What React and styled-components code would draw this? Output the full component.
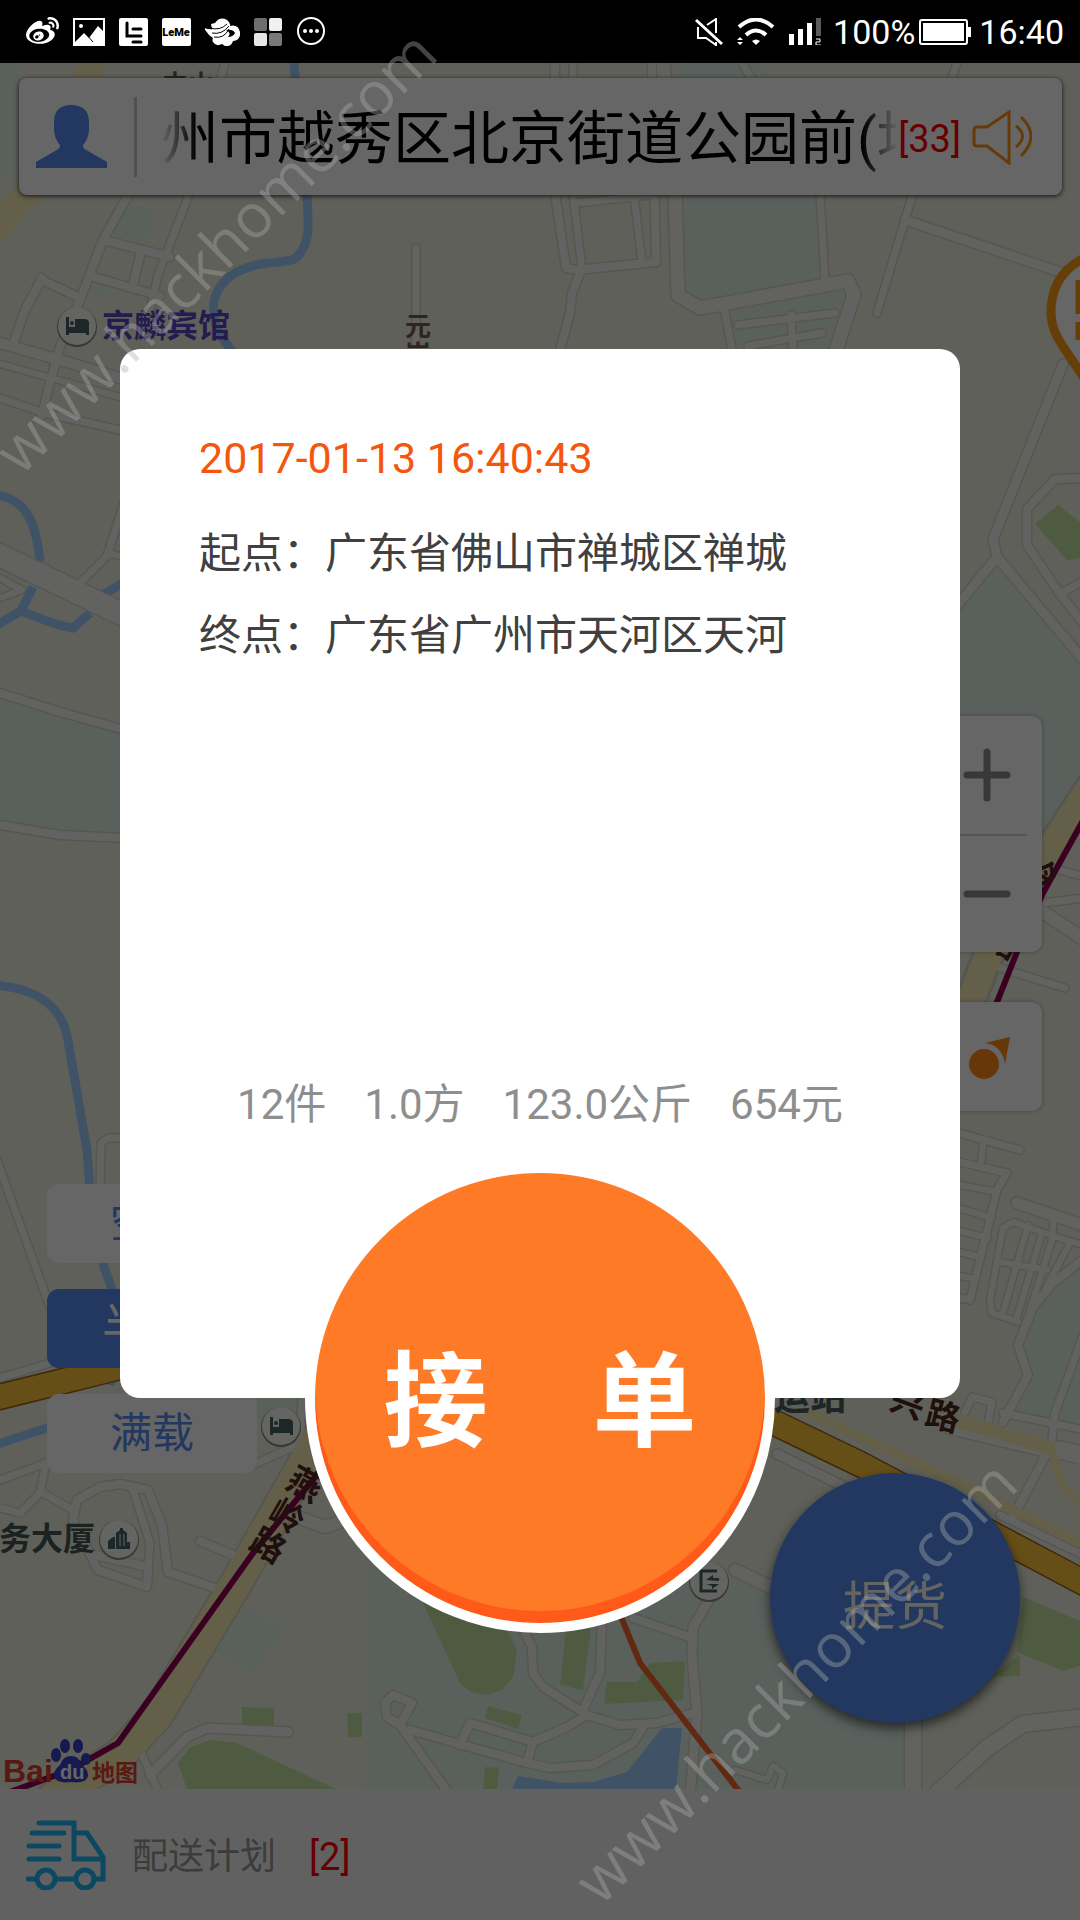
import React from 'react';
import styled, { createGlobalStyle } from 'styled-components';
import { FaWeibo } from 'react-icons/fa';

const GlobalStyle = createGlobalStyle`
    *, *::before, *::after {
        box-sizing: border-box;
    }
    body {
        margin: 0;
        background: #000;
        font-family: Roboto, "Noto Sans CJK SC", sans-serif;
    }
    button {
        font: inherit;
        border: 0;
        padding: 0;
        cursor: pointer;
    }
`

const Page = styled.div`
    position: relative;
    display: flex;
    flex-direction: column;
    min-height: 100vh;
    overflow: hidden;
`

const StatusBar = styled.header`
    display: flex;
    align-items: center;
    justify-content: space-between;
    height: 63px;
    padding: 0 16px 0 26px;
    background: #000;
    color: #fff;
    font-size: 34px;
    line-height: 40px;
`

const StatusGroup = styled.div`
    display: flex;
    align-items: center;
    gap: ${props => props.$gap}px;
    svg {
        display: block;
    }
`

const Screen = styled.main`
    position: relative;
    flex: 1;
    display: flex;
    flex-direction: column;
`

const MapArea = styled.section`
    position: relative;
    flex: 1;
    padding: 15px 18px 0 19px;
    overflow: hidden;
    background: #ebf0de;
`

const MapDrawing = styled.svg`
    position: absolute;
    inset: 0;
    width: 100%;
    height: 100%;
`

const NoticeCard = styled.div`
    position: relative;
    display: flex;
    align-items: center;
    height: 117px;
    padding: 0 30px 0 17px;
    border-radius: 8px;
    background: #fff;
    box-shadow: 0 1px 5px rgba(0, 0, 0, 0.8);
`

const IconButton = styled.button`
    display: flex;
    background: none;
    svg {
        display: block;
    }
`

const Divider = styled.div`
    width: 3px;
    height: 80px;
    margin: 0 24px 0 27px;
    background: #c8c8c8;
`

const Marquee = styled.p`
    flex: 1;
    min-width: 0;
    margin: 0;
    padding-top: 4px;
    overflow: hidden;
    white-space: nowrap;
    font-size: 58px;
    line-height: 80px;
    color: #000;
    mask-image: linear-gradient(to right, transparent, #000 36px, #000 calc(100% - 36px), transparent);
`

const Count = styled.span`
    font-size: 38px;
    line-height: 48px;
    color: #f00;
`

const NoticeCount = styled(Count)`
    margin-right: 11px;
    padding-top: 4px;
`

const LoadModes = styled.div`
    position: absolute;
    left: 47px;
    bottom: 316px;
    display: flex;
    flex-direction: column;
    gap: 26px;
`

const ModeButton = styled.button`
    width: 210px;
    height: 79px;
    border-radius: 12px;
    font-size: ${props => (props.$active ? 50 : 42)}px;
    line-height: 79px;
    background: ${props => (props.$active ? '#558cf0' : '#fff')};
    color: ${props => (props.$active ? '#fff' : '#558cf0')};
`

const SideTools = styled.div`
    position: absolute;
    right: 38px;
    bottom: 678px;
    width: 111px;
    display: flex;
    flex-direction: column;
    gap: 50px;
`

const ToolCard = styled.div`
    display: flex;
    flex-direction: column;
    padding: 0 15px;
    border-radius: 10px;
    background: #fff;
    box-shadow: 0 0 4px rgba(0, 0, 0, 0.3);
`

const ToolButton = styled.button`
    display: flex;
    align-items: center;
    justify-content: center;
    height: ${props => props.$height}px;
    background: none;
    & + & {
        border-top: 2px solid #d2d2d2;
    }
`

const PickupButton = styled.button`
    position: absolute;
    right: 60px;
    bottom: 66px;
    width: 250px;
    height: 250px;
    padding-top: 8px;
    border-radius: 50%;
    background: #558cf0;
    color: #fafaf0;
    font-size: 52px;
    box-shadow: 0 5px 12px rgba(0, 0, 0, 0.6);
`

const PlanBar = styled.footer`
    display: flex;
    align-items: center;
    height: 131px;
    padding: 0 26px;
    background: #f2f2f2;
`

const PlanLink = styled.a`
    display: flex;
    align-items: center;
    color: #969696;
    font-size: 36px;
    line-height: 48px;
    text-decoration: none;
    svg {
        margin-right: 26px;
    }
    span {
        padding-top: 4px;
    }
    ${Count} {
        margin-left: 33px;
    }
`

const Scrim = styled.div`
    position: absolute;
    inset: 0;
    display: flex;
    flex-direction: column;
    align-items: center;
    justify-content: center;
    padding: 0 120px 2px;
    background: rgba(0, 0, 0, 0.6);
`

const Dialog = styled.section`
    align-self: stretch;
    display: flex;
    flex-direction: column;
    min-height: 1049px;
    padding: 84px 79px 268px;
    border-radius: 20px;
    background: #fff;
    color: #404040;
    font-size: 42px;
    line-height: 50px;
`

const OrderTime = styled.time`
    color: #f5560e;
    font-size: 43px;
`

const Route = styled.dl`
    display: flex;
    flex-direction: column;
    gap: 32px;
    margin: 46px 0 auto;
    div {
        display: flex;
    }
    dd {
        margin: 0;
    }
`

const Cargo = styled.ul`
    display: flex;
    justify-content: center;
    gap: 38px;
    margin: 0;
    padding: 0;
    list-style: none;
    color: #8e8e8e;
`

const AcceptButton = styled.button`
    display: flex;
    align-items: center;
    justify-content: center;
    gap: 105px;
    width: 470px;
    height: 470px;
    margin-top: -235px;
    padding-top: 13px;
    border: 10px solid #fff;
    border-radius: 50%;
    background: #ff7a26;
    box-shadow: inset 0 -12px 0 #ff5a19;
    color: #fff;
    font-size: 104px;
    font-weight: 700;
    line-height: 120px;
`

const Watermark = styled.span`
    position: absolute;
    left: ${props => props.$left};
    ${props => props.$edge}: ${props => props.$offset};
    font-family: "Open Sans", sans-serif;
    font-size: 61px;
    font-weight: 500;
    line-height: 60px;
    color: rgba(172, 172, 172, 0.39);
    transform: rotate(-45deg);
    transform-origin: 0 53px;
    pointer-events: none;
`

// [width, points]
const roads = [
    [8, '150,140 127,197 103,240 80,300 60,347 48,390 42,415'],
    [7, '225,63 187,200 158,275 150,310'],
    [8, '103,240 170,257'],
    [8, '90,276 160,296'],
    [8, '141,252 133,285'],
    [8, '42,280 80,298'],
    [8, '42,278 25,310 14,342'],
    [10, '0,343 60,360 120,378'],
    [6, '0,364 120,397'],
    [7, '0,398 44,413 120,430'],
    [22, '-5,553 130,618'],
    [7, '125,500 107,556 80,583'],
    [6, '107,553 125,557'],
    [6, '0,578 22,590 0,598'],
    [8, '0,693 60,712 125,730'],
    [8, '0,825 60,835 125,838'],
    [7, '416,248 416,350'],
    [8, '555,63 555,193 566,268 577,270 656,262 652,63'],
    [7, '573,63 573,193 582,270'],
    [7, '577,203 650,195'],
    [7, '634,196 642,262'],
    [8, '580,273 572,293 570,313 560,350'],
    [13, '663,63 675,190 678,295 700,308 848,281 854,295 836,350'],
    [7, '742,63 820,193 825,280'],
    [7, '724,307 732,350'],
    [7, '738,325 835,313'],
    [7, '748,346 822,333'],
    [7, '791,315 793,350'],
    [7, '957,63 913,193 905,220 877,313'],
    [9, '905,220 1060,272'],
    [9, '1063,364 993,539 997,557'],
    [9, '955,608 997,557 1085,662'],
    [8, '1085,478 1055,479 1027,509 1027,545 1060,594 1085,625'],
    [7, '1060,594 1085,580'],
    [12, '1085,940 1043,912'],
    [7, '1043,903 1085,898'],
    [7, '1060,870 1085,877'],
    [7, '1000,968 1065,988'],
    [7, '955,1132 1020,1150'],
    [6, '983,1145 981,1163'],
    [7, '955,1161 1007,1173 997,1190 970,1300 955,1297'],
    [6, '955,1184 997,1192'],
    [6, '955,1207 992,1218'],
    [6, '955,1230 988,1238'],
    [6, '955,1251 980,1257'],
    [6, '955,1275 975,1279'],
    [11, '1017,1203 1085,1226'],
    [6, '1085,1245 1065,1240 1013,1222 1003,1228 990,1300 992,1313 1018,1322'],
    [6, '1028,1225 1003,1313'],
    [6, '1042,1233 1017,1317'],
    [6, '1053,1237 1030,1310'],
    [6, '1070,1243 1045,1290'],
    [6, '1054,1215 1052,1240'],
    [6, '1000,1262 1047,1270'],
    [8, '1085,1258 1053,1283 1033,1307 1018,1345 1028,1375 1003,1422'],
    [7, '1085,1330 1055,1413 1052,1440'],
    [7, '1003,1413 1085,1430'],
    [7, '965,1412 972,1397 992,1402 988,1423'],
    [8, '950,1430 1047,1453 1013,1517'],
    [17, '1060,1450 1090,1457'],
    [9, '777,1454 845,1487'],
    [7, '1000,1515 1085,1556'],
    [12, '735,1570 775,1589'],
    [16, '913,1700 913,1800'],
    [16, '930,1800 987,1748 1023,1724 1085,1717'],
    [6, '735,1770 767,1780 773,1766 783,1773 777,1795'],
    [8, '523,1630 532,1647 533,1673 543,1687 587,1715 620,1725 657,1723 693,1713'],
    [8, '602,1620 600,1673 583,1710'],
    [8, '587,1715 567,1727 533,1742 470,1723 460,1745'],
    [8, '410,1730 527,1763 550,1768 593,1765 633,1743 643,1727'],
    [8, '533,1742 527,1763'],
    [8, '450,1795 400,1725 412,1703 393,1695 385,1703 387,1717 400,1725'],
    [8, '633,1618 692,1638'],
    [9, '715,1590 693,1627 692,1657 697,1713 690,1795'],
    [8, '200,1541 240,1558'],
    [8, '215,1588 168,1572 162,1525 148,1490 120,1484 100,1487 77,1500 73,1520 98,1570 147,1587 148,1567 95,1555'],
    [7, '133,1490 150,1543 147,1583'],
    [7, '43,1493 73,1510'],
    [7, '0,1480 46,1463 40,1493 20,1513 0,1508'],
    [7, '255,1464 300,1444 302,1400'],
    [12, '300,1518 325,1527 345,1520'],
    [7, '140,1750 160,1795'],
    [9, '150,1775 187,1737 207,1728 288,1732'],
    [7, '-5,1155 50,1307'],
    [7, '100,1190 101,1143 108,1138 125,1138'],
    [7, '0,1378 50,1363']
];

const rivers = [
    'M293,55 L307,195 C308,225 312,240 297,257 C290,265 262,258 235,273 C212,288 208,310 220,335 L235,355',
    'M-5,495 C25,498 36,520 40,562',
    'M33,587 L21,611 L-5,626',
    'M21,611 C40,618 55,626 73,628 L90,613',
    'M104,594 L125,582',
    'M-5,985 C35,988 60,1005 67,1035 L87,1150 L90,1190 L98,1250 L125,1325 L110,1385',
    'M-5,1445 L50,1427'
];

const waters = [
    '0,63 20,63 19,172 0,175',
    '123,200 157,213 143,243 112,235',
    '95,283 110,287 105,297 92,293',
    '681,63 760,63 818,195 826,282 700,303 681,290',
    '730,307 845,290 832,350 738,350',
    '950,610 997,563 1080,665 1080,775 1040,835 950,860',
    '0,697 60,716 125,735 125,833 60,830 0,820',
    '1080,1268 1035,1310 1022,1345 1032,1377 1010,1412 1080,1425',
    '365,1480 735,1572 775,1592 905,1700 905,1789 365,1789',
    '247,1607 283,1627 257,1673 213,1650',
    '280,1440 305,1430 303,1400 240,1400'
];

const parks = [
    '1035,524 1058,505 1080,522 1080,558 1067,560',
    '1023,1597 1080,1621 1080,1666 1063,1671 1017,1652',
    '990,1677 1020,1655 1020,1676',
    '417,1590 433,1600 507,1630 517,1650 513,1677 502,1690 487,1695 470,1692 460,1683',
    '567,1620 592,1620 583,1690 560,1685',
    '607,1682 637,1682 650,1663 685,1661 683,1700 604,1704',
    '488,1706 522,1715 518,1729 485,1718',
    '485,1767 499,1768 497,1789 483,1789',
    '242,1707 274,1708 274,1725 242,1725',
    '347,1713 362,1713 362,1737 348,1737',
    '178,1763 190,1747 210,1740 237,1743 336,1789 187,1789'
];

const PoiDot = ({ x, y, children }) => (
    <g transform={`translate(${x} ${y})`}>
        <circle cy="1" r="20" fill="#8c8c80" />
        <circle r="19" fill="#fafaf5" />
        <g fill="#466464">{children}</g>
    </g>
)

const Bed = () => (
    <>
        <path d="M-11,-9 h3 v13 h18 v3 h-18 v2 h-3z" />
        <circle cx="-5" cy="-3" r="2" />
        <path d="M-2,-7 h9 q5,0 5,4 v12 h-3 v-4 h-11z" />
        <path d="M-8,1 h8 v4 h-8z" />
    </>
)

const MapView = () => (
    <MapDrawing viewBox="0 63 1080 1726" preserveAspectRatio="xMidYMid slice" aria-hidden="true">
        <g fill="#e0f0e7">{waters.map(points => <polygon key={points} points={points} />)}</g>
        <g fill="#c6e4a3">{parks.map(points => <polygon key={points} points={points} />)}</g>
        <polygon points="518,1776 563,1783 593,1782 627,1772 662,1728 682,1728 676,1789 512,1789" fill="#a0d0ff" />
        <g fill="none" stroke="#a0d0ff" strokeWidth="9">
            {rivers.map(d => <path key={d} d={d} />)}
        </g>
        <g fill="none" stroke="#d6d7cb" strokeLinejoin="round" strokeLinecap="round">
            {roads.map(([width, points]) => <polyline key={points} points={points} strokeWidth={width + 3} />)}
            <polyline points="320,1435 238,1580 157,1715 120,1755 50,1800" strokeWidth="35" />
            <polyline points="1092,785 1000,925 965,1015" strokeWidth="33" />
        </g>
        <g fill="none" stroke="#f5f5f2" strokeLinejoin="round" strokeLinecap="round">
            {roads.map(([width, points]) => <polyline key={points} points={points} strokeWidth={width} />)}
        </g>
        <g fill="none" stroke="#f8edb6" strokeLinejoin="round">
            <polyline points="98,55 30,190 -10,235" strokeWidth="26" />
            <polyline points="320,1435 238,1580 157,1715 120,1755 50,1800" strokeWidth="31" />
            <polyline points="1092,785 1000,925 965,1015" strokeWidth="27" />
            <polyline points="807,1412 973,1490 1090,1548" strokeWidth="10" />
            <polyline points="950,1418 1053,1449" strokeWidth="14" />
            <polyline points="1050,1445 1063,1487 1090,1510" strokeWidth="8" />
        </g>
        <g fill="none">
            <polyline points="-5,1398 120,1367 400,1330 700,1390 777,1424 860,1464 1090,1586" stroke="#a0641e" strokeWidth="27" />
            <polyline points="-5,1398 120,1367 400,1330 700,1390 777,1424 860,1464 1090,1586" stroke="#ffc63a" strokeWidth="24" />
            <polyline points="325,1465 253,1553 118,1743 70,1770 10,1792" stroke="#910055" strokeWidth="6" />
            <polyline points="1085,817 1043,893 1017,952 997,1002 960,1080" stroke="#910055" strokeWidth="6" />
            <polyline points="610,1590 640,1663 742,1795" stroke="#f5642d" strokeWidth="6" />
        </g>

        <PoiDot x={77} y={326}><Bed /></PoiDot>
        <PoiDot x={281} y={1426}><Bed /></PoiDot>
        <PoiDot x={119} y={1539}>
            <path d="M-11,10 v-8 l5,-4 h2 v12z M-3,10 v-16 l4,-3 v-2 h3 v2 l4,3 v9 h3 v7z" />
            <path d="M1,-5 v12 M5,-5 v12" stroke="#fafaf5" strokeWidth="1" />
        </PoiDot>
        <PoiDot x={709} y={1581}>
            <path d="M8,-10 h-16 v20 h16" fill="none" stroke="#466464" strokeWidth="3" />
            <path d="M-3,-1 l7,-5 v3 h6 v3 z M-3,3 h13 l-7,5 v-3z" />
        </PoiDot>

        <g fontFamily='"Noto Sans CJK SC", sans-serif' fontWeight="700">
            <text x="102" y="337" fontSize="32" fill="#5a46c3">京麟宾馆</text>
            <text x="-1" y="1550" fontSize="32" fill="#465550">务大厦</text>
            <text x="774" y="1410" fontSize="36" fill="#465f5f">运站</text>
            <g fill="#785a4b" fontSize="26">
                <text x="405" y="336">元</text>
                <text x="405" y="364">岗</text>
                <text x="162" y="94">中山</text>
            </g>
            <g fill="#50281e" fontSize="34" textAnchor="middle">
                <text transform="translate(904 1414) rotate(20)">兴</text>
                <text transform="translate(940 1428) rotate(14)">路</text>
                <text transform="translate(299 1495) rotate(30)">燕</text>
                <text transform="translate(281 1527) rotate(30)">岭</text>
                <text transform="translate(262 1556) rotate(30)">路</text>
                <text transform="translate(1033 884) rotate(30)">岭</text>
                <text transform="translate(997 952) rotate(30)">路</text>
            </g>
        </g>

        <path d="M1090,255 C1060,268 1051,290 1051,312 C1051,338 1068,350 1090,388z" fill="#fff" stroke="#ff9b14" strokeWidth="9" />
        <path d="M1078,280 v34 M1078,322 v18" stroke="#ff9b14" strokeWidth="5" />

        <g fontFamily='"Liberation Sans", "Noto Sans CJK SC", sans-serif' fontWeight="700">
            <g fill="#3741c8">
                <ellipse cx="56" cy="1755" rx="5" ry="7" />
                <ellipse cx="65" cy="1746" rx="5" ry="7" />
                <ellipse cx="78" cy="1746" rx="5" ry="7" />
                <ellipse cx="86" cy="1759" rx="5" ry="6" />
                <path d="M71,1756 q8,0 11,9 q7,6 6,11 q-2,8 -17,6 q-15,2 -17,-6 q-1,-5 6,-11 q3,-9 11,-9z" />
            </g>
            <text x="3" y="1782" fontSize="32" fill="#e13c2d">Bai</text>
            <text x="60" y="1779" fontSize="20" fill="#fff">du</text>
            <text x="92" y="1781" fontSize="23" fill="#e13c2d">地图</text>
        </g>
    </MapDrawing>
)

const StatusIcons = () => (
    <StatusGroup $gap={14} aria-hidden="true">
        <FaWeibo size={33} />
        <svg width="32" height="28" viewBox="0 0 32 28">
            <path d="M0,0 h32 v28 h-32z M2,2 v22 l9,-9 5,5 9,-12 5,5 v-11z" fill="#fff" fillRule="evenodd" />
            <path d="M14,17 l6,7" stroke="#000" strokeWidth="1" />
            <circle cx="8" cy="8" r="2" fill="#fff" />
        </svg>
        <svg width="29" height="28" viewBox="0 0 29 28">
            <rect width="29" height="28" rx="2" fill="#fff" />
            <path d="M8,5 v13 h6 M14,11 h8 M14,18 h8 M14,24 h8" fill="none" stroke="#000" strokeWidth="3" strokeLinecap="round" />
        </svg>
        <svg width="29" height="28" viewBox="0 0 29 28">
            <rect width="29" height="28" rx="2" fill="#fff" />
            <text x="14" y="18" textAnchor="middle" fontFamily="Roboto, sans-serif" fontSize="11" fontWeight="900" fill="#000">LeMe</text>
        </svg>
        <svg width="35" height="28" viewBox="0 0 35 28">
            <path d="M10,5 q5,-7 12,-3 q4,3 3,6 q8,-2 10,6 q1,8 -7,9 q-2,6 -8,5 l-3,-2 q-6,3 -9,-2 q-1,-2 0,-4 q-5,-3 -9,-10 q5,2 9,1 q-2,-2 -2,-5z" fill="#fff" />
            <path d="M5,10 q10,3 17,-4 M7,15 q10,2 17,-7 M9,19 q10,2 15,-8" fill="none" stroke="#000" strokeWidth="1" />
            <path d="M21,12 q7,-1 9,3 q-2,4 -7,4 q4,-4 -2,-7z" fill="#000" />
        </svg>
        <svg width="29" height="28" viewBox="0 0 29 28">
            <rect width="13" height="13" rx="2" fill="#6e6e6e" />
            <rect x="15" width="13" height="13" rx="2" fill="#f0f0f0" />
            <rect y="15" width="13" height="13" rx="2" fill="#e6e6e6" />
            <rect x="15" y="15" width="13" height="13" rx="2" fill="#787878" />
        </svg>
        <svg width="29" height="29" viewBox="0 0 29 29" fill="#fff">
            <circle cx="14" cy="14" r="13" fill="none" stroke="#fff" strokeWidth="2" />
            <circle cx="8" cy="14" r="2" />
            <circle cx="14" cy="14" r="2" />
            <circle cx="20" cy="14" r="2" />
        </svg>
    </StatusGroup>
)

const StatusInfo = () => (
    <StatusGroup $gap={8}>
        <StatusGroup $gap={14} aria-hidden="true">
            <svg width="28" height="28" viewBox="0 0 28 28" fill="none" stroke="#fff" strokeWidth="2">
                <path d="M1,2 L27,26" strokeWidth="3" />
                <path d="M12,7 l9,-6 v14 M3,9 v11 h8 l10,7 v-3" />
            </svg>
            <svg width="38" height="28" viewBox="0 0 38 28">
                <path d="M2,9 q17,-15 34,0 M9,17 q10,-9 20,0" fill="none" stroke="#fff" strokeWidth="4" />
                <path d="M15,23 q4,-3 8,0 l-4,4z M0,22 l3,-3 3,3z M0,24 l3,3 3,-3z" fill="#fff" />
            </svg>
            <svg width="36" height="27" viewBox="0 0 36 27">
                <path d="M0,16 h5 v11 h-5z M9,11 h5 v16 h-5z M18,5 h5 v22 h-5z" fill="#fff" />
                <path d="M27,0 h5 v18 h-5z" fill="#5a5a5a" />
                <path d="M27,21 h4 v3 h-4 v3 h5" fill="none" stroke="#fff" strokeWidth="1" />
            </svg>
        </StatusGroup>
        <StatusGroup $gap={4}>
            <span>100%</span>
            <svg width="52" height="26" viewBox="0 0 52 26" aria-hidden="true">
                <rect x="1" y="1" width="47" height="24" rx="2" fill="none" stroke="#fff" strokeWidth="2" />
                <path d="M4,4 h41 v18 h-41z M49,8 h3 v10 h-3z" fill="#fff" />
            </svg>
        </StatusGroup>
        <span>16:40</span>
    </StatusGroup>
)

const Notice = () => (
    <NoticeCard>
        <IconButton aria-label="个人中心">
            <svg width="71" height="63" viewBox="0 0 71 63" fill="#558cf0">
                <path d="M18,17 C18,5 25,0 35,0 C46,0 53,5 53,17 V24 C53,31 50,37 47,40 C47,43 48,44 52,46 L71,57 V63 H0 V57 L19,46 C23,44 24,43 24,40 C21,37 18,31 18,24z" />
            </svg>
        </IconButton>
        <Divider />
        <Marquee>州市越秀区北京街道公园前(地</Marquee>
        <NoticeCount>[33]</NoticeCount>
        <IconButton aria-label="播报">
            <svg width="60" height="56" viewBox="0 0 60 56" fill="none" stroke="#ff9214" strokeWidth="3">
                <path d="M5,18 h10 L37,3 v51 L15,37 H5 q-3,0 -3,-3 V21 q0,-3 3,-3z" />
                <path d="M44,17 q13,10 0,21 M49,8 q20,19 0,39" />
            </svg>
        </IconButton>
    </NoticeCard>
)

const modes = ['空载', '半载', '满载'];

const cargo = ['12件', '1.0方', '123.0公斤', '654元'];

const App = () => {
    const [mode, setMode] = React.useState('半载');

    return (
        <Page>
            <GlobalStyle />
            <StatusBar>
                <StatusIcons />
                <StatusInfo />
            </StatusBar>
            <Screen>
                <MapArea>
                    <MapView />
                    <Notice />
                    <LoadModes>
                        {modes.map(name => (
                            <ModeButton key={name} $active={name === mode} onClick={() => setMode(name)}>{name}</ModeButton>
                        ))}
                    </LoadModes>
                    <SideTools>
                        <ToolCard>
                            <ToolButton $height={118} aria-label="放大">
                                <svg width="48" height="54" viewBox="0 0 48 54" stroke="#8c8c8c" strokeWidth="7" strokeLinecap="round">
                                    <path d="M4,27 h40 M24,4 v46" />
                                </svg>
                            </ToolButton>
                            <ToolButton $height={118} aria-label="缩小">
                                <svg width="48" height="8" viewBox="0 0 48 8" stroke="#8c8c8c" strokeWidth="7" strokeLinecap="round">
                                    <path d="M4,4 h40" />
                                </svg>
                            </ToolButton>
                        </ToolCard>
                        <ToolCard>
                            <ToolButton $height={109} aria-label="定位">
                                <svg width="46" height="44" viewBox="0 0 46 44" fill="#ff8a16">
                                    <circle cx="20" cy="29" r="15" />
                                    <path d="M46,2 L21,8 Q38,10 41,29z" />
                                </svg>
                            </ToolButton>
                        </ToolCard>
                    </SideTools>
                    <PickupButton>提货</PickupButton>
                </MapArea>
                <PlanBar>
                    <PlanLink href="#plan">
                        <svg width="80" height="70" viewBox="0 0 80 70" fill="none" stroke="#1eb4f5" strokeWidth="5" aria-hidden="true">
                            <path d="M13,3 H48 V39 H76 M6,13 H38 M3,26 H33 M3,39 H33 M48,13 H61 L77,37 V59 H68 M2,59 H10 M30,59 H49" strokeLinecap="round" />
                            <circle cx="20" cy="59" r="9" />
                            <circle cx="59" cy="59" r="9" />
                        </svg>
                        <span>配送计划</span>
                        <Count>[2]</Count>
                    </PlanLink>
                </PlanBar>
                <Scrim>
                    <Dialog role="dialog" aria-label="新订单">
                        <OrderTime>2017-01-13 16:40:43</OrderTime>
                        <Route>
                            <div>
                                <dt>起点：</dt>
                                <dd>广东省佛山市禅城区禅城</dd>
                            </div>
                            <div>
                                <dt>终点：</dt>
                                <dd>广东省广州市天河区天河</dd>
                            </div>
                        </Route>
                        <Cargo>
                            {cargo.map(item => <li key={item}>{item}</li>)}
                        </Cargo>
                    </Dialog>
                    <AcceptButton>
                        <span>接</span>
                        <span>单</span>
                    </AcceptButton>
                </Scrim>
            </Screen>
            <Watermark $left="21px" $edge="top" $offset="424px" aria-hidden="true">www.hackhome.com</Watermark>
            <Watermark $left="601px" $edge="bottom" $offset="6px" aria-hidden="true">www.hackhome.com</Watermark>
        </Page>
    )
}

export default App
